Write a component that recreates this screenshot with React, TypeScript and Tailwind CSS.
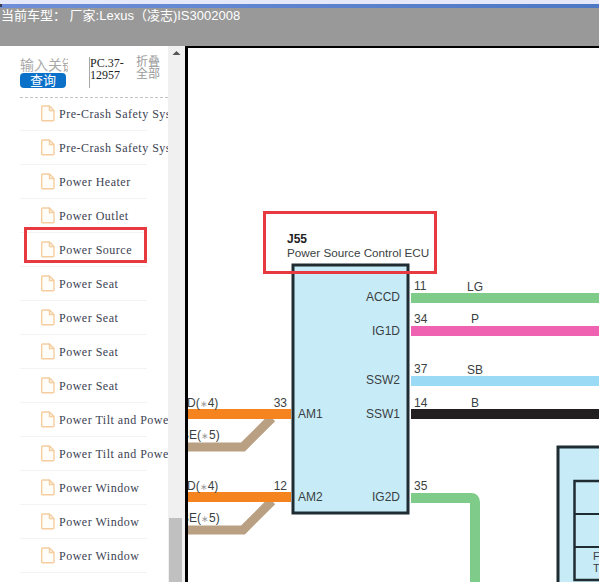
const rows = [
  "Pre-Crash Safety System",
  "Pre-Crash Safety System",
  "Power Heater",
  "Power Outlet",
  "Power Source",
  "Power Seat",
  "Power Seat",
  "Power Seat",
  "Power Seat",
  "Power Tilt and Power Telescopic",
  "Power Tilt and Power Telescopic",
  "Power Window",
  "Power Window",
  "Power Window",
]

function FileIcon() {
  return (
    <svg width="14" height="17" viewBox="0 0 14 17" className="shrink-0" fill="#fffdf9" stroke="#f6cd9f" strokeWidth="1.4">
      <path d="M1.7 1h6.8L13 5.5v9.3a1 1 0 0 1-1 1H1.7a1 1 0 0 1-1-1V2a1 1 0 0 1 1-1z" />
      <path d="M8.5 1v4.500H13" fill="none" />
    </svg>
  )
}

function Sidebar() {
  return (
    <div className="relative w-[168px] shrink-0 overflow-hidden bg-white">
      <div className="flex h-[51px] items-start pl-5 pt-[11px]">
        <div className="flex w-[46px] shrink-0 flex-col">
          <div className="h-[16px] w-[48px] overflow-hidden whitespace-nowrap text-[14px] leading-[16px] text-[#a9a9a9]">输入关键词</div>
          <div className="h-[15px] rounded-[4px] bg-[#0a70c8] text-center text-[13px] leading-[15px] text-white">查询</div>
        </div>
        <div className="ml-[23px] h-[31px] w-[45px] shrink-0 border-l border-[#a8a8a8] font-['Liberation_Serif'] text-[12px] leading-[12px] text-[#222]">
          PC.37-
          <br />
          12957
        </div>
        <div className="-mt-px ml-[2px] w-[25px] text-[12px] leading-[12px] text-[#9a9a9a]">
          折叠
          <br />
          全部
        </div>
      </div>
      <div className="ml-5 border-t border-dashed border-[#c4c4c4]" />
      <div className="-mt-px">
        {rows.map((name, i) => (
          <div key={i} className="ml-5 flex h-[34px] w-[127px] items-center gap-[4px] border-b border-[#f3f3f3] pl-[21px]">
            <FileIcon />
            <span className="whitespace-nowrap font-['Liberation_Serif'] text-[12px] tracking-[0.5px] text-[#3b4252]">{name}</span>
          </div>
        ))}
      </div>
      <div className="absolute left-[24px] top-[181px] h-[36px] w-[123px] border-[3px] border-[#e63a40]" />
    </div>
  )
}

function Scrollbar() {
  return (
    <div className="flex w-[17px] shrink-0 flex-col justify-between bg-[#f0f0f0]">
      <svg width="17" height="17" viewBox="0 0 17 17">
        <path d="M8.5 5l4 4h-8z" fill="#555" />
      </svg>
      <div className="ml-px h-[64px] w-[13px] bg-[#c0c0c0]" />
    </div>
  )
}

function Diagram() {
  return (
    <svg className="block h-full w-full font-['Liberation_Sans']" viewBox="188 48 411 534" fontSize="12" fill="#3a3f42">
      {/* wires */}
      <g fill="none" strokeWidth="10">
        <path d="M411 298H599" stroke="#7fcb8a" />
        <path d="M411 331H599" stroke="#ef62b2" />
        <path d="M411 381H599" stroke="#9adaf4" />
        <path d="M411 414H599" stroke="#231f20" />
        <path d="M411 498H471q4 0 4 4V582" stroke="#7fcb8a" />
        <path d="M188 447H243L272 418" stroke="#b9a082" strokeWidth="9" />
        <path d="M188 530H243L272 501" stroke="#b9a082" strokeWidth="9" />
        <path d="M188 414H291" stroke="#f5841f" />
        <path d="M188 497H291" stroke="#f5841f" />
      </g>

      {/* J55 */}
      <rect x="293" y="265" width="115" height="248" fill="#c8ebf8" stroke="#1f2d33" strokeWidth="3" />
      <text x="287" y="243" fontWeight="700" fill="#222">J55</text>
      <text x="287" y="257" fontSize="11.700">Power Source Control ECU</text>
      <rect x="264.500" y="212.500" width="171" height="60" fill="none" stroke="#e63a40" strokeWidth="3" />

      <g textAnchor="end">
        <text x="400" y="301">ACCD</text>
        <text x="400" y="335">IG1D</text>
        <text x="400" y="384">SSW2</text>
        <text x="400" y="418">SSW1</text>
        <text x="400" y="501">IG2D</text>
        <text x="287" y="407">33</text>
        <text x="287" y="490">12</text>
      </g>
      <text x="298" y="418">AM1</text>
      <text x="298" y="501">AM2</text>

      <text x="414" y="290">11</text>
      <text x="414" y="323">34</text>
      <text x="414" y="373">37</text>
      <text x="414" y="407">14</text>
      <text x="414" y="490">35</text>

      <g textAnchor="middle">
        <text x="475" y="291">LG</text>
        <text x="475" y="323">P</text>
        <text x="475" y="374">SB</text>
        <text x="475" y="407">B</text>
      </g>

      <text x="187" y="407">D(<tspan fill="#9a9a9a" fontSize="9">∗</tspan>4)</text>
      <text x="181" y="439">BE(<tspan fill="#9a9a9a" fontSize="9">∗</tspan>5)</text>
      <text x="187" y="490">D(<tspan fill="#9a9a9a" fontSize="9">∗</tspan>4)</text>
      <text x="181" y="522">BE(<tspan fill="#9a9a9a" fontSize="9">∗</tspan>5)</text>

      {/* next component, cut off by the right edge */}
      <rect x="558" y="447" width="60" height="160" fill="#c8ebf8" stroke="#1f2d33" strokeWidth="3" />
      <rect x="574.500" y="481" width="60" height="99" fill="#c8ebf8" stroke="#1f2d33" strokeWidth="2.500" />
      <path d="M574 514H599M574 547H599" stroke="#1f2d33" strokeWidth="2" />
      <text x="593" y="560" fontSize="11">F</text>
      <text x="593" y="572" fontSize="11">T</text>
    </svg>
  )
}

export default function App() {
  return (
    <div className="relative flex h-[582px] w-[599px] flex-col overflow-hidden bg-white font-['Liberation_Sans','Noto_Sans_CJK_SC',sans-serif]">
      <div className="h-[4px] shrink-0 bg-[#e4e8f8]" />
      <div className="h-[4px] shrink-0 bg-gradient-to-r from-[#6f8fd8] to-[#4d78c4]" />
      <div className="absolute left-0 top-[4px] h-[3px] w-[2px] bg-[#3a3f55]" />
      <div className="h-[38px] shrink-0 whitespace-pre bg-[#999999] pl-px text-[13px] leading-[15px] text-white">
        当前车型： 厂家:Lexus（凌志)IS3002008
      </div>
      <div className="flex min-h-0 flex-1">
        <Sidebar />
        <Scrollbar />
        <div className="min-w-0 flex-1 border-l-[3px] border-t-2 border-black bg-white">
          <Diagram />
        </div>
      </div>
    </div>
  )
}
